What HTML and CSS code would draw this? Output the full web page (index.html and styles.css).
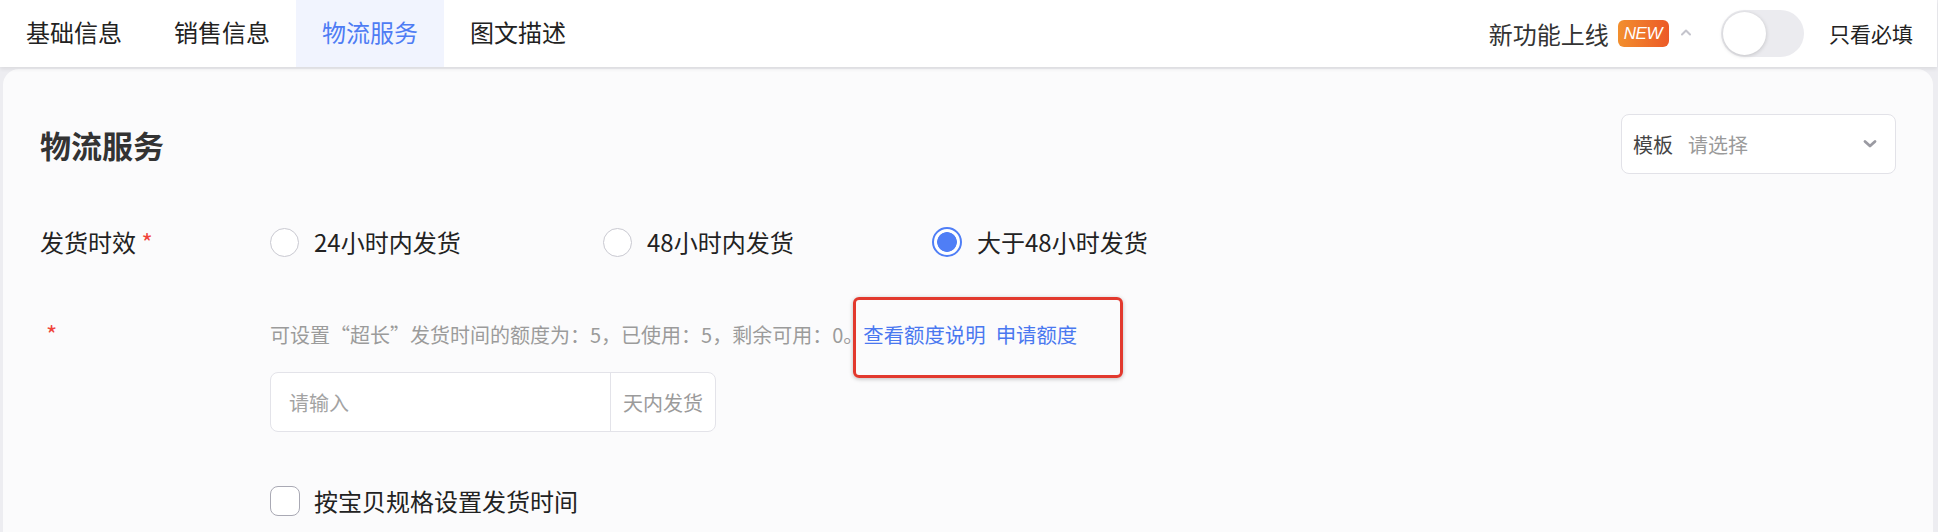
FILE: index.html
```html
<!DOCTYPE html>
<html lang="zh-CN">
<head>
    <meta charset="UTF-8">
    <meta name="viewport" content="width=device-width, initial-scale=1.0">
    <title>物流服务</title>
    <link rel="stylesheet" href="styles.css">
</head>
<body>

<!-- 顶部导航 -->
<nav class="topbar">
    <div class="tabs">
        <a class="tab">基础信息</a>
        <a class="tab">销售信息</a>
        <a class="tab active">物流服务</a>
        <a class="tab">图文描述</a>
    </div>
    <div class="topbar-right">
        <span class="feature">新功能上线</span>
        <span class="badge-new">NEW</span>
        <svg class="caret" width="12" height="8" viewBox="0 0 12 8">
            <path d="M2 6.5 L6 2.5 L10 6.5" fill="none" stroke="#c4c4cc" stroke-width="2" stroke-linecap="round" stroke-linejoin="round"/>
        </svg>
        <span class="switch"><span class="switch-knob"></span></span>
        <span class="only-required">只看必填</span>
    </div>
</nav>

<main class="panel">
    <div class="panel-head">
        <h2 class="panel-title">物流服务</h2>
        <div class="select">
            <span class="select-label">模板</span>
            <span class="select-placeholder">请选择</span>
            <svg class="select-arrow" width="16" height="10" viewBox="0 0 16 10">
                <path d="M3 2.5 L8 7 L13 2.5" fill="none" stroke="#9a9aa2" stroke-width="2.8" stroke-linecap="round" stroke-linejoin="round"/>
            </svg>
        </div>
    </div>

    <div class="form-row row-time">
        <div class="form-label">发货时效 <span class="required">*</span></div>
        <div class="radio-group">
            <label class="radio"><span class="radio-dot"></span>24小时内发货</label>
            <label class="radio"><span class="radio-dot"></span>48小时内发货</label>
            <label class="radio checked"><span class="radio-dot"></span>大于48小时发货</label>
        </div>
    </div>

    <div class="form-row row-extra">
        <div class="form-label form-label-star"><span class="required">*</span></div>
        <div class="form-body">
            <p class="help">可设置“超长”发货时间的额度为：5，已使用：5，剩余可用：0。<span class="links"><a>查看额度说明</a><a>申请额度</a><span class="mark-box"></span></span></p>
            <div class="input-group">
                <input class="input" type="text" placeholder="请输入">
                <span class="input-suffix">天内发货</span>
            </div>
            <label class="checkbox"><span class="checkbox-box"></span>按宝贝规格设置发货时间</label>
        </div>
    </div>
</main>

</body>
</html>
```

FILE: styles.css
```css
body {
    margin: 0;
    padding: 0;
    background-color: #ededf1;
    font-family: "Noto Sans CJK SC", "Noto Sans", sans-serif;
    font-size: 24px;
    color: #222;
    height: 532px;
    overflow: hidden;
}

/* 顶部导航 */
.topbar {
    display: flex;
    justify-content: space-between;
    align-items: stretch;
    height: 67px;
    margin-right: 1px;
    background-color: #fff;
    box-shadow: 0 2px 4px rgba(0, 0, 0, 0.08);
    position: relative;
    z-index: 1;
}
.tabs {
    display: flex;
}
.tab {
    display: flex;
    align-items: center;
    padding: 0 26px 3px;
    line-height: 1;
    color: #222;
    cursor: pointer;
}
.tab.active {
    background-color: #f1f4fe;
    color: #4e7cf4;
}
.topbar-right {
    display: flex;
    align-items: center;
    padding-right: 24px;
}
.feature {
    color: #333;
    line-height: 1;
}
.badge-new {
    margin-left: 9px;
    padding: 0 7px 0 6px;
    height: 27px;
    line-height: 27px;
    border-radius: 6px;
    background: linear-gradient(90deg, #f28f2e, #ec5a27);
    color: #fff;
    font-family: "Liberation Sans", Arial, sans-serif;
    font-size: 17px;
    font-style: italic;
    letter-spacing: -0.5px;
}
.caret {
    margin-left: 11px;
    margin-top: -4px;
}
.switch {
    margin-left: 29px;
    width: 83px;
    height: 47px;
    border-radius: 24px;
    background-color: #ebebef;
    position: relative;
}
.switch-knob {
    position: absolute;
    left: 2px;
    top: 2px;
    width: 43px;
    height: 43px;
    border-radius: 50%;
    background-color: #fff;
    box-shadow: 0 1px 4px rgba(0, 0, 0, 0.18);
}
.only-required {
    margin-left: 25px;
    font-size: 21px;
    line-height: 1;
    color: #222;
}

/* 内容面板 */
.panel {
    box-sizing: border-box;
    margin: 2px 5px 0 3px;
    padding: 45px 37px 0 37px;
    height: 463px;
    background-color: #fbfbfc;
    border-radius: 16px 16px 0 0;
}
.panel-head {
    display: flex;
    justify-content: space-between;
    align-items: center;
}
.panel-title {
    margin: 0;
    font-size: 31px;
    font-weight: 600;
    color: #333;
    line-height: 1;
}
.select {
    display: flex;
    align-items: center;
    width: 275px;
    height: 60px;
    padding: 0 17px 0 11px;
    box-sizing: border-box;
    border: 1px solid #e2e2e8;
    border-radius: 8px;
    background-color: #fff;
    font-size: 20px;
}
.select-label {
    color: #444;
}
.select-placeholder {
    margin-left: 15px;
    color: #9a9a9a;
    flex: 1;
}

.form-row {
    display: flex;
    align-items: flex-start;
}
.required {
    color: #f0433a;
}
.row-time {
    margin-top: 52px;
    align-items: center;
    height: 32px;
}
.form-label {
    width: 230px;
    flex-shrink: 0;
    line-height: 32px;
    color: #222;
}
.radio-group {
    display: grid;
    grid-template-columns: 333px 329px auto;
}
.radio {
    display: flex;
    align-items: center;
    line-height: 32px;
    cursor: pointer;
}
.radio-dot {
    width: 27px;
    height: 27px;
    margin-right: 15px;
    border: 1.5px solid #c9c9d1;
    border-radius: 50%;
    background-color: #fff;
    box-sizing: content-box;
}
.radio.checked .radio-dot {
    border: 2px solid #4f7ef6;
    width: 26px;
    height: 26px;
    background: radial-gradient(circle, #4f7ef6 0 9.5px, #fff 10.2px);
}

.row-extra {
    margin-top: 62px;
}
.form-label-star {
    padding-left: 6px;
    box-sizing: border-box;
    line-height: 28px;
}
.form-body {
    display: flex;
    flex-direction: column;
    align-items: flex-start;
}
.help {
    margin: 0;
    font-size: 20px;
    line-height: 28px;
    color: #9b9b9b;
}
.links {
    display: inline-block;
    position: relative;
    font-size: 20.4px;
}
.links a {
    color: #4a78f0;
    cursor: pointer;
}
.links a + a {
    margin-left: 10px;
}
/* 红框标注 */
.mark-box {
    position: absolute;
    left: -10px;
    right: -46px;
    top: -23px;
    bottom: -30px;
    border: 3px solid #e2392e;
    border-radius: 6px;
    box-shadow: 0 1px 4px rgba(0, 0, 0, 0.25);
}
.input-group {
    display: flex;
    margin-top: 23px;
    width: 446px;
    height: 60px;
    box-sizing: border-box;
    border: 1px solid #e3e3e9;
    border-radius: 8px;
    background-color: #fff;
}
.input {
    flex: 1;
    min-width: 0;
    border: none;
    outline: none;
    background: transparent;
    padding: 0 18px;
    font-family: inherit;
    font-size: 20px;
    color: #333;
    border-radius: 8px 0 0 8px;
}
.input::placeholder {
    color: #a3a3a3;
}
.input-suffix {
    display: flex;
    align-items: center;
    padding: 0 12px;
    border-left: 1px solid #e3e3e9;
    font-size: 20px;
    color: #9b9b9b;
}
.checkbox {
    display: flex;
    align-items: center;
    margin-top: 53px;
    line-height: 32px;
    color: #222;
    cursor: pointer;
}
.checkbox-box {
    width: 28px;
    height: 28px;
    margin-right: 14px;
    border: 1.5px solid #a9a9b4;
    border-radius: 8px;
    background-color: #fff;
}
```
